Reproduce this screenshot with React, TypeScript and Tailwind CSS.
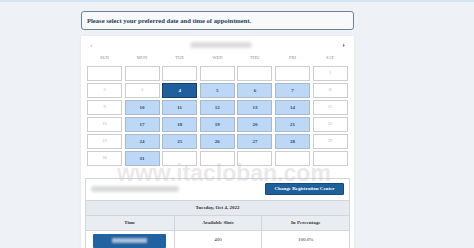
const serif = "font-['Liberation_Serif','DejaVu_Serif',serif]";

type Cell = { day?: number; state: "empty" | "off" | "open" | "selected" };

const weeks: Cell[][] = [
  [
    { state: "empty" }, { state: "empty" }, { state: "empty" }, { state: "empty" },
    { state: "empty" }, { state: "empty" }, { day: 1, state: "off" },
  ],
  [
    { day: 2, state: "off" }, { day: 3, state: "off" }, { day: 4, state: "selected" },
    { day: 5, state: "open" }, { day: 6, state: "open" }, { day: 7, state: "open" },
    { day: 8, state: "off" },
  ],
  [9, 10, 11, 12, 13, 14, 15].map((d, i) => ({ day: d, state: i === 0 || i === 6 ? "off" : "open" })),
  [16, 17, 18, 19, 20, 21, 22].map((d, i) => ({ day: d, state: i === 0 || i === 6 ? "off" : "open" })),
  [23, 24, 25, 26, 27, 28, 29].map((d, i) => ({ day: d, state: i === 0 || i === 6 ? "off" : "open" })),
  [
    { day: 30, state: "off" }, { day: 31, state: "open" }, { state: "empty" }, { state: "empty" },
    { state: "empty" }, { state: "empty" }, { state: "empty" },
  ],
] as Cell[][];

const days = ["SUN", "MON", "TUE", "WED", "THU", "FRI", "SAT"];

function DayCell({ cell }: { cell: Cell }) {
  if (cell.state === "selected") {
    return (
      <div className="h-[14.5px] flex items-center justify-center bg-[#1f5f9e] border border-[#1a3f66] text-[5px] font-bold text-white">
        {cell.day}
      </div>
    );
  }
  if (cell.state === "open") {
    return (
      <div className="h-[14.5px] flex items-center justify-center bg-[#bdd8f6] border border-[#a9b9cc] text-[5px] font-bold text-[#33475f]">
        {cell.day}
      </div>
    );
  }
  return (
    <div className="h-[14.5px] flex items-center justify-center bg-white border border-[#cdcdcd] text-[4.5px] text-[#b3b3b3]">
      {cell.day}
    </div>
  );
}

export default function App() {
  return (
    <div className={`relative w-[474px] h-[248px] overflow-hidden bg-[#eef2f6] border-t-2 border-[#d3e6f3] ${serif}`}>
      <div className="ml-[81px] w-[273px]">
        {/* Prompt */}
        <div className="mt-[9px] h-[19px] flex items-center px-[5px] rounded-[3px] border-[1.5px] border-[#6b8194] bg-[#f7f9fb]">
          <p className="text-[6.6px] font-bold text-[#2b3d56]">
            Please select your preferred date and time of appointment.
          </p>
        </div>

        {/* Calendar card */}
        <div className="mt-[6px] bg-white px-[4px] pt-[4px] shadow-[0_0_3px_rgba(0,0,0,0.06)]">
          <div className="h-[10px] flex items-center justify-between px-[5px]">
            <span className="text-[7px] text-[#8a8a8a] leading-none">‹</span>
            <div className="w-[62px] h-[6px] rounded-full bg-[#dcdcdc] blur-[1.5px] ml-[8px]" />
            <span className="text-[8px] font-bold text-[#333] leading-none">›</span>
          </div>

          <div className="ml-[2px] mt-[3px] grid grid-cols-[repeat(7,35px)] gap-x-[2.6px] h-[10px] items-center">
            {days.map((d) => (
              <span key={d} className="text-center text-[4.5px] text-[#8c8c8c]">{d}</span>
            ))}
          </div>

          <div className="ml-[2px] mt-[3px] grid grid-cols-[repeat(7,35px)] gap-x-[2.6px] gap-y-[2.5px]">
            {weeks.flat().map((c, i) => (
              <DayCell key={i} cell={c} />
            ))}
          </div>

          {/* Slots panel */}
          <div className="mt-[12px] border border-[#cfd5dc] bg-white">
            <div className="h-[21px] flex items-center justify-between px-[5px]">
              <div className="w-[88px] h-[6px] rounded-full bg-[#d9d9d9] blur-[1.5px]" />
              <div className="w-[79px] h-[12px] flex items-center justify-center bg-[#1f5f9c] rounded-[1px] border border-[#174a7a]">
                <span className="text-[5px] font-bold text-white">Change Registration Center</span>
              </div>
            </div>
            <div className="h-[15px] flex items-center justify-center bg-[#e6e9ee] border-t border-[#cfd5dc]">
              <span className="text-[5px] font-bold text-[#333]">Tuesday, Oct 4, 2022</span>
            </div>
            <div className="h-[15px] grid grid-cols-3 bg-[#e9ecf0] border-t border-[#cfd5dc] text-[5px] font-bold text-[#333]">
              <div className="flex items-center justify-center">Time</div>
              <div className="flex items-center justify-center border-l border-[#cfd5dc]">Available Slots</div>
              <div className="flex items-center justify-center border-l border-[#cfd5dc]">In Percentage</div>
            </div>
            <div className="h-[22px] grid grid-cols-3 border-t border-[#cfd5dc] text-[5px] text-[#333]">
              <div className="flex items-start justify-center pt-[3px]">
                <div className="w-[73px] h-[14px] bg-[#2162a0] rounded-[1px] flex items-center justify-center">
                  <div className="w-[35px] h-[5px] bg-[#a9bfd8] blur-[0.8px]" />
                </div>
              </div>
              <div className="flex items-center justify-center border-l border-[#cfd5dc] pb-[2px]">400</div>
              <div className="flex items-center justify-center border-l border-[#cfd5dc] pb-[2px]">100.0%</div>
            </div>
          </div>
        </div>
      </div>

      {/* Watermark */}
      <div className="absolute left-[117px] top-[160px] text-[23px] leading-none font-bold font-['Liberation_Sans',Arial,sans-serif] text-[rgba(200,194,197,0.38)] pointer-events-none">
        www.itacloban.com
      </div>
    </div>
  );
}
